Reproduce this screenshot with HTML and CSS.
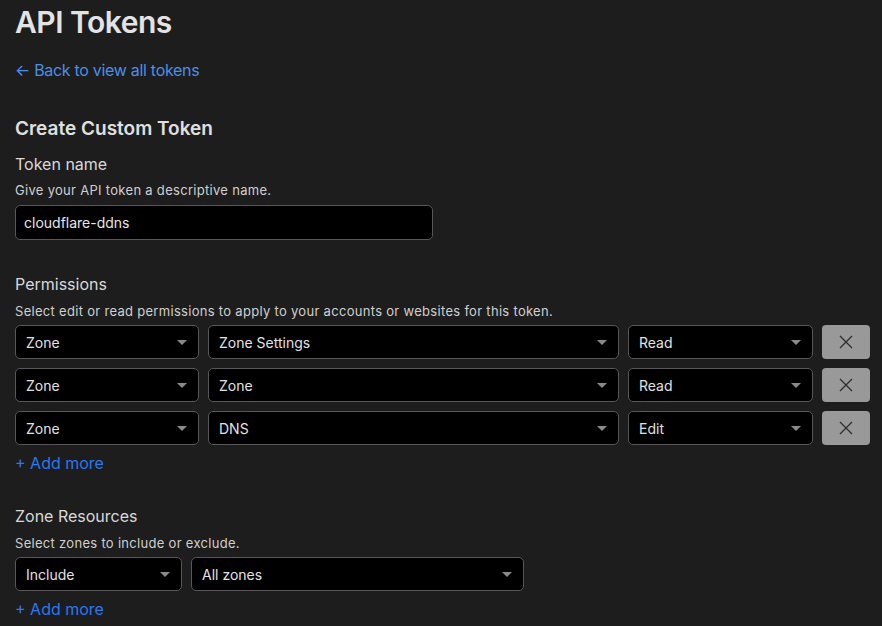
FILE: index.html
```html
<!DOCTYPE html>
<html>
<head>
<meta charset="utf-8">
<link rel="stylesheet" href="styles.css">
</head>
<body>
<main class="page">
  <h1 class="title">API Tokens</h1>
  <a class="back-link" href="#">← Back to view all tokens</a>

  <h2 class="section-title">Create Custom Token</h2>

  <div class="field-label gap-sm">Token name</div>
  <div class="field-help">Give your API token a descriptive name.</div>
  <div class="text-input">cloudflare-ddns</div>

  <div class="field-label gap-lg">Permissions</div>
  <div class="field-help">Select edit or read permissions to apply to your accounts or websites for this token.</div>
  <div class="perm-list">
    <div class="perm-row">
      <div class="select w-scope"><span>Zone</span><i class="caret"></i></div>
      <div class="select w-item"><span>Zone Settings</span><i class="caret"></i></div>
      <div class="select w-level"><span>Read</span><i class="caret"></i></div>
      <button class="remove-btn"><svg width="16" height="16" viewBox="0 0 16 16"><path d="M2 2L14 14M14 2L2 14" stroke="#2e2e2e" stroke-width="1.3" fill="none"/></svg></button>
    </div>
    <div class="perm-row">
      <div class="select w-scope"><span>Zone</span><i class="caret"></i></div>
      <div class="select w-item"><span>Zone</span><i class="caret"></i></div>
      <div class="select w-level"><span>Read</span><i class="caret"></i></div>
      <button class="remove-btn"><svg width="16" height="16" viewBox="0 0 16 16"><path d="M2 2L14 14M14 2L2 14" stroke="#2e2e2e" stroke-width="1.3" fill="none"/></svg></button>
    </div>
    <div class="perm-row">
      <div class="select w-scope"><span>Zone</span><i class="caret"></i></div>
      <div class="select w-item"><span>DNS</span><i class="caret"></i></div>
      <div class="select w-level"><span>Edit</span><i class="caret"></i></div>
      <button class="remove-btn"><svg width="16" height="16" viewBox="0 0 16 16"><path d="M2 2L14 14M14 2L2 14" stroke="#2e2e2e" stroke-width="1.3" fill="none"/></svg></button>
    </div>
  </div>
  <a class="add-more" href="#">+ Add more</a>

  <div class="field-label gap-lg2">Zone Resources</div>
  <div class="field-help">Select zones to include or exclude.</div>
  <div class="perm-list">
    <div class="perm-row zone-row">
      <div class="select w-include"><span>Include</span><i class="caret"></i></div>
      <div class="select w-zones"><span>All zones</span><i class="caret"></i></div>
    </div>
  </div>
  <a class="add-more" href="#">+ Add more</a>
</main>
</body>
</html>
```
FILE: styles.css
```css
html, body {
  margin: 0;
  padding: 0;
  background: #1d1d1d;
}
body {
  font-family: Inter, "Noto Sans", "Liberation Sans", sans-serif;
  color: #d6d6d6;
}
.page {
  padding: 0 0 0 15px;
  display: flex;
  flex-direction: column;
  align-items: flex-start;
}
.title {
  margin: 0;
  font-size: 30px;
  line-height: 44px;
  font-weight: 600;
  color: #e3e3e3;
  letter-spacing: -0.5px;
}
.back-link {
  margin-top: 14px;
  font-size: 16px;
  line-height: 24px;
  color: #4b8fe6;
  text-decoration: none;
  letter-spacing: -0.3px;
}
.section-title {
  margin: 33px 0 0;
  font-size: 19px;
  line-height: 28px;
  font-weight: 600;
  color: #e0e0e0;
}
.field-label {
  font-size: 16px;
  line-height: 22px;
  color: #d9d9d9;
}
.gap-sm { margin-top: 10px; }
.gap-lg { margin-top: 33px; }
.gap-lg2 { margin-top: 31px; }
.field-help {
  margin-top: 6px;
  font-size: 13px;
  line-height: 18px;
  color: #d0d0d0;
  letter-spacing: 0.3px;
}
.text-input {
  margin-top: 6px;
  box-sizing: border-box;
  width: 418px;
  height: 35px;
  padding: 0 8px;
  display: flex;
  align-items: center;
  background: #000;
  border: 1px solid #575757;
  border-radius: 5px;
  font-size: 14px;
  color: #e6e6e6;
}
.field-help + .perm-list { margin-top: 5px; }
.field-label + .field-help { margin-top: 7px; }
.gap-sm + .field-help { margin-top: 6px; }
.perm-list {
  display: flex;
  flex-direction: column;
  gap: 9px;
}
.perm-row {
  display: flex;
  gap: 9px;
  height: 34px;
}
.select {
  box-sizing: border-box;
  height: 34px;
  padding: 0 11px 0 10px;
  display: flex;
  align-items: center;
  justify-content: space-between;
  background: #000;
  border: 1px solid #575757;
  border-radius: 5px;
  font-size: 14px;
  color: #e2e2e2;
}
.caret {
  width: 0;
  height: 0;
  border-left: 5px solid transparent;
  border-right: 5px solid transparent;
  border-top: 5px solid #8a8a8a;
}
.w-scope { width: 184px; }
.w-item { width: 411px; }
.w-level { width: 185px; }
.w-include { width: 167px; }
.w-zones { width: 333px; }
.zone-row { gap: 9px; }
.remove-btn {
  box-sizing: border-box;
  width: 48px;
  height: 34px;
  border: none;
  border-radius: 4px;
  background: #999999;
  display: flex;
  align-items: center;
  justify-content: center;
  padding: 0;
}
.add-more {
  margin-top: 7px;
  font-size: 16px;
  line-height: 22px;
  color: #2a78f0;
  text-decoration: none;
}
```
